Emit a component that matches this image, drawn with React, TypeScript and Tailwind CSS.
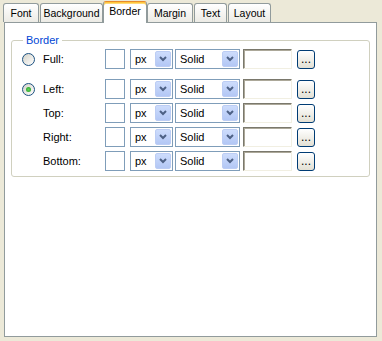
import React from 'react';

const tabs = [
  { name: 'Font', w: 'w-[36px]' },
  { name: 'Background', w: 'w-[63px]' },
  { name: 'Border', w: 'w-[44px]', active: true },
  { name: 'Margin', w: 'w-[46px]' },
  { name: 'Text', w: 'w-[33px]' },
  { name: 'Layout', w: 'w-[43px]' },
];

const rows = [
  { label: 'Full:', radio: 'off' },
  { label: 'Left:', radio: 'on' },
  { label: 'Top:' },
  { label: 'Right:' },
  { label: 'Bottom:' },
];

function Tab({ name, w, active }: { name: string; w: string; active?: boolean }) {
  if (active) {
    return (
      <div
        className={`${w} -mx-[1px] h-[22px] flex items-center justify-center rounded-t-[3px] border border-b-0 border-[#919b9c] border-t-[#e68b2c] bg-white pb-[1px] shadow-[inset_0_1px_0_#ffc83c,inset_0_2px_0_#ffd97a] relative z-10`}
      >
        {name}
      </div>
    );
  }
  return (
    <div
      className={`${w} mt-[2px] h-[19px] flex items-center justify-center rounded-t-[3px] border border-b-0 border-[#919b9c] bg-gradient-to-b from-white to-[#ecebe5] pt-[1px]`}
    >
      {name}
    </div>
  );
}

function Radio({ checked }: { checked: boolean }) {
  return (
    <span className="flex h-[13px] w-[13px] items-center justify-center rounded-full border border-[#1c5180] bg-gradient-to-br from-[#d4d2c8] to-white">
      {checked && <span className="h-[5px] w-[5px] rounded-full bg-[radial-gradient(circle,#5ed35a,#1f9a1f)]" />}
    </span>
  );
}

function Combo({ value, w }: { value: string; w: string }) {
  return (
    <div className={`${w} flex h-[20px] items-stretch border border-[#7f9db9] bg-white`}>
      <span className="flex flex-1 items-center pl-[4px]">{value}</span>
      <span className="m-[1px] flex w-[16px] items-center justify-center rounded-[2px] border border-[#bccdf4] bg-gradient-to-b from-[#cddcfc] to-[#b3c7f5]">
        <svg width="8" height="6" viewBox="0 0 8 6">
          <path d="M1 1 L4 4 L7 1" stroke="#4d6185" strokeWidth="2" fill="none" />
        </svg>
      </span>
    </div>
  );
}

export default function App() {
  return (
    <div className="flex h-[341px] w-[382px] flex-col bg-[#ece9d8] pl-[3px] pt-[1px] font-['Liberation_Sans',Arial,sans-serif] text-[11px] text-black">
      <div className="relative z-10 -mb-[1px] flex h-[22px] items-start gap-[1px] text-[10.5px]">
        {tabs.map((t) => (
          <Tab key={t.name} {...t} />
        ))}
      </div>
      <div className="ml-[1px] h-[315px] w-[373px] border border-[#919b9c] bg-white">
        <fieldset className="ml-[6px] mt-[11px] w-[359px] rounded-[3px] border border-[#d0d0bf] pb-[5px] pl-[10px]">
          <legend className="ml-[1px] px-[3px] leading-[13px] text-[#0046d5]">Border</legend>
          <div className="flex flex-col gap-[4px] pt-[2px]">
            {rows.map((r, i) => (
              <div key={r.label} className={`flex h-[20px] items-center ${i === 1 ? 'mt-[6px]' : ''}`}>
                <div className="w-[21px]">{r.radio && <Radio checked={r.radio === 'on'} />}</div>
                <span className="w-[62px]">{r.label}</span>
                <span className="h-[20px] w-[20px] border border-[#7f9db9] bg-white" />
                <div className="ml-[5px]">
                  <Combo value="px" w="w-[43px]" />
                </div>
                <div className="ml-[2px]">
                  <Combo value="Solid" w="w-[65px]" />
                </div>
                <span className="ml-[3px] h-[20px] w-[49px] border border-t-[#7a786c] border-l-[#7a786c] border-r-[#f1efe2] border-b-[#f1efe2] bg-white shadow-[inset_1px_1px_0_#aca899]" />
                <button className="ml-[5px] flex h-[19px] w-[18px] items-center justify-center rounded-[3px] border border-[#003c74] bg-gradient-to-b from-white to-[#e3e0d4] text-[12px] leading-none">
                  ...
                </button>
              </div>
            ))}
          </div>
        </fieldset>
      </div>
    </div>
  );
}
